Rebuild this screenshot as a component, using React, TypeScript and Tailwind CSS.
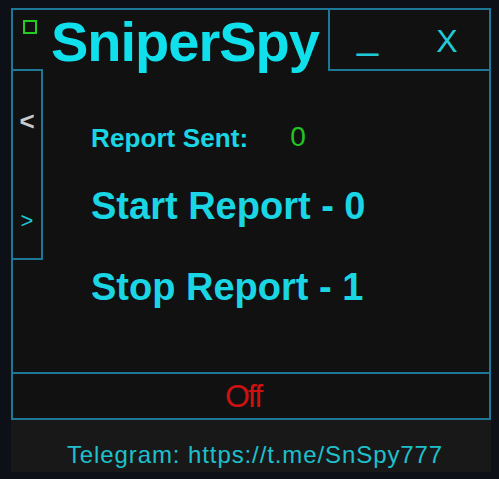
export default function App() {
  return (
    <div className="h-[479px] w-[499px] bg-[#0d1117] pl-[11px] pt-[8px] font-['Liberation_Sans',Arial,sans-serif]">
      {/* Main frame */}
      <div className="flex h-[412px] w-[480px] flex-col border-2 border-[#1d7898] bg-[#111111]">
        {/* Header */}
        <div className="flex h-[61px] shrink-0">
          <div className="flex flex-1 items-start">
            <div className="ml-[10px] mt-[10px] size-[14px] border-2 border-[#22cc22]" />
            <h1 className="ml-[14px] mt-[4px] text-[56px] font-bold leading-none tracking-[-1px] text-[#10dfec]">
              SniperSpy
            </h1>
          </div>
          <div className="flex w-[161px] items-start border-b-2 border-l-2 border-[#1d7898] text-[#1fcad6]">
            <span className="ml-[27px] mt-[6px] text-[38px] leading-none">_</span>
            <span className="ml-[58px] mt-[15px] text-[32px] leading-none">X</span>
          </div>
        </div>

        {/* Body */}
        <div className="-mt-[2px] flex">
          <div className="flex h-[191px] w-[30px] shrink-0 flex-col items-center border-y-2 border-r-2 border-[#1d7898]">
            <span className="mt-[37px] text-[26px] font-bold leading-none text-[#c8c8c8]">&lt;</span>
            <span className="mt-[76px] text-[22px] leading-none text-[#1fcad6]">&gt;</span>
          </div>
          <div className="ml-[48px] flex flex-col pt-[56px] text-[#1ad6e4]">
            <div className="flex items-start">
              <span className="text-[26px] font-bold leading-none tracking-[0.1px]">Report Sent:</span>
              <span className="ml-[42px] mt-[-2px] text-[28px] leading-none text-[#22c422]">0</span>
            </div>
            <p className="mt-[36px] text-[38px] font-bold leading-none">Start Report - 0</p>
            <p className="mt-[43px] text-[38px] font-bold leading-none">Stop Report - 1</p>
          </div>
        </div>

        <div className="flex-1" />

        {/* Status bar */}
        <div className="flex h-[46px] shrink-0 items-center justify-center border-t-2 border-[#1d7898] pr-[16px]">
          <span className="text-[32px] leading-none tracking-[-2px] text-[#cc1111]">Off</span>
        </div>
      </div>

      {/* Footer */}
      <div className="flex h-[52px] w-[480px] justify-center bg-[#181818] pl-[8px] pt-[23px]">
        <span className="text-[24px] leading-none tracking-[0.9px] text-[#1ec0cc]">
          Telegram: https://t.me/SnSpy777
        </span>
      </div>
    </div>
  );
}
